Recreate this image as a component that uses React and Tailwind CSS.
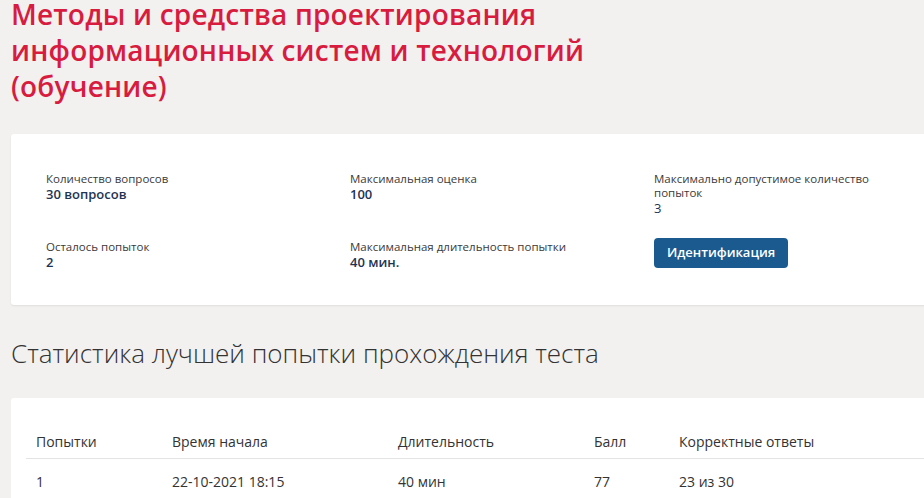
export default function App() {
  const info = [
    { label: "Количество вопросов", value: "30 вопросов" },
    { label: "Максимальная оценка", value: "100" },
    { label: "Максимально допустимое количество попыток", value: "3", light: true },
    { label: "Осталось попыток", value: "2" },
    { label: "Максимальная длительность попытки", value: "40 мин." },
  ];
  const cols = ["w-[136px]", "w-[226px]", "w-[196px]", "w-[85px]", "flex-1"];
  const head = ["Попытки", "Время начала", "Длительность", "Балл", "Корректные ответы"];
  const row = ["1", "22-10-2021 18:15", "40 мин", "77", "23 из 30"];
  return (
    <div className="w-[924px] h-[498px] overflow-hidden bg-[#f2f1ef] font-['Open_Sans',sans-serif]">
      <div className="pl-[11px]">
        <h1 className="-mt-[4px] text-[28px] leading-[36px] tracking-[0.2px] font-semibold text-[#d81c3f]">
          Методы и средства проектирования<br />информационных систем и технологий<br />(обучение)
        </h1>
        <div className="mt-[30px] w-[940px] h-[171px] bg-white rounded-[3px] shadow-[0_1px_2px_rgba(0,0,0,0.08)] pl-[35px] pt-[38px]">
          <div className="grid grid-cols-[304px_304px_260px] gap-y-[24px]">
            {info.map((it, i) => (
              <div key={i} className="flex flex-col">
                <span className="text-[11.5px] leading-[14px] text-[#3a3a3a] w-[225px]">{it.label}</span>
                <span className={"text-[13px] leading-[16px] text-[#1e3453] " + (it.light ? "font-normal" : "font-semibold")}>{it.value}</span>
              </div>
            ))}
            <div className="-mt-[2px]">
              <button className="h-[30px] px-[13px] rounded-[4px] bg-[#1b5a8e] text-white text-[13px] font-semibold">Идентификация</button>
            </div>
          </div>
        </div>
        <h2 className="mt-[32px] text-[26px] leading-[32px] font-light text-[#333]">
          Статистика лучшей попытки прохождения теста
        </h2>
        <div className="mt-[29px] w-[940px] h-[120px] bg-white rounded-[3px] pl-[15px] pr-[10px] pt-[26px] text-[14px] text-[#333]">
          <div className="flex h-[35px] items-center border-b border-[#e3e3e3] pl-[10px]">
            {head.map((h, i) => (<div key={i} className={cols[i]}>{h}</div>))}
          </div>
          <div className="flex h-[44px] items-center pl-[10px]">
            {row.map((h, i) => (<div key={i} className={cols[i]}>{h}</div>))}
          </div>
        </div>
      </div>
    </div>
  );
}
